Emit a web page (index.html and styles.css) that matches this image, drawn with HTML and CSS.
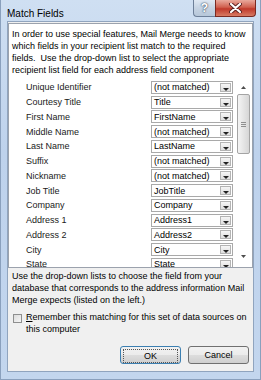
FILE: index.html
```html
<!DOCTYPE html>
<html>
  <head>
    <title>Match Fields</title>
    <link rel="stylesheet" href="styles.css">
  </head>
  <body>
    <div class="window">

      <div class="titlebar">
        <span class="title">Match Fields</span>
        <div class="caption-buttons">
          <span class="cap-btn help">?</span>
          <span class="cap-btn close">
            <svg width="13" height="10" viewBox="0 0 13 10">
              <path d="M2 1 L11 9 M11 1 L2 9" stroke="#5a2020" stroke-width="4" stroke-linecap="round"/>
              <path d="M2 1 L11 9 M11 1 L2 9" stroke="#ffffff" stroke-width="2.2" stroke-linecap="round"/>
            </svg>
          </span>
        </div>
      </div>

      <div class="client">

        <div class="panel">
          <p class="intro">
            In order to use special features, Mail Merge needs to know
            which fields in your recipient list match to the required
            fields.&nbsp; Use the drop-down list to select the appropriate
            recipient list field for each address field component
          </p>

          <div class="list">
            <div class="rows">
              <div class="row"><span class="label">Unique Identifier</span><span class="combo"><span class="value">(not matched)</span><span class="drop"></span></span></div>
              <div class="row"><span class="label">Courtesy Title</span><span class="combo"><span class="value">Title</span><span class="drop"></span></span></div>
              <div class="row"><span class="label">First Name</span><span class="combo"><span class="value">FirstName</span><span class="drop"></span></span></div>
              <div class="row"><span class="label">Middle Name</span><span class="combo"><span class="value">(not matched)</span><span class="drop"></span></span></div>
              <div class="row"><span class="label">Last Name</span><span class="combo"><span class="value">LastName</span><span class="drop"></span></span></div>
              <div class="row"><span class="label">Suffix</span><span class="combo"><span class="value">(not matched)</span><span class="drop"></span></span></div>
              <div class="row"><span class="label">Nickname</span><span class="combo"><span class="value">(not matched)</span><span class="drop"></span></span></div>
              <div class="row"><span class="label">Job Title</span><span class="combo"><span class="value">JobTitle</span><span class="drop"></span></span></div>
              <div class="row"><span class="label">Company</span><span class="combo"><span class="value">Company</span><span class="drop"></span></span></div>
              <div class="row"><span class="label">Address 1</span><span class="combo"><span class="value">Address1</span><span class="drop"></span></span></div>
              <div class="row"><span class="label">Address 2</span><span class="combo"><span class="value">Address2</span><span class="drop"></span></span></div>
              <div class="row"><span class="label">City</span><span class="combo"><span class="value">City</span><span class="drop"></span></span></div>
              <div class="row"><span class="label">State</span><span class="combo"><span class="value">State</span><span class="drop"></span></span></div>
            </div>

            <div class="scrollbar">
              <span class="sb-arrow">
                <svg width="5" height="3" viewBox="0 0 5 3"><polygon points="0,3 5,3 2.5,0" fill="#4d4d4d"/></svg>
              </span>
              <div class="sb-track">
                <div class="sb-thumb"><span class="grip"></span></div>
              </div>
              <span class="sb-arrow">
                <svg width="5" height="3" viewBox="0 0 5 3"><polygon points="0,0 5,0 2.5,3" fill="#4d4d4d"/></svg>
              </span>
            </div>
          </div>
        </div>

        <p class="note">
          Use the drop-down lists to choose the field from your
          database that corresponds to the address information Mail
          Merge expects (listed on the left.)
        </p>

        <div class="remember">
          <span class="checkbox"></span>
          <span class="remember-text"><u>R</u>emember this matching for this set of data sources on this computer</span>
        </div>

        <div class="buttons">
          <button class="btn default"><span class="focus">OK</span></button>
          <button class="btn">Cancel</button>
        </div>

      </div>
    </div>
  </body>
</html>
```

FILE: styles.css
```css
body {
    margin: 0;
    padding: 0;
    font-family: "Liberation Sans", Arial, sans-serif;
    font-size: 9px;
    color: #000000;
    background-color: #bfd3ec;
}

.window {
    width: 261px;
    height: 380px;
    box-sizing: border-box;
    background: linear-gradient(#cfdff2, #bed2ec 40%, #c3d6ee);
    border: 1px solid #8aa0bd;
    border-top: none;
    display: flex;
    flex-direction: column;
}

.titlebar {
    height: 21px;
    display: flex;
    flex-direction: row;
    align-items: flex-start;
    justify-content: space-between;
}

.title {
    font-size: 10px;
    padding: 8px 0 0 6px;
}

.caption-buttons {
    display: flex;
    flex-direction: row;
    margin-right: 4px;
}

.cap-btn {
    height: 16px;
    display: flex;
    align-items: center;
    justify-content: center;
    border: 1px solid #6d7f99;
    border-top: none;
}

.help {
    width: 21px;
    border-right: none;
    border-radius: 0 0 0 4px;
    background: linear-gradient(#dfe8f3, #c6d3e3 50%, #b7c7da);
    color: #ffffff;
    font-size: 12px;
    font-weight: bold;
    text-shadow: 0 0 2px #3c4a5c, 0 0 1px #3c4a5c;
}

.close {
    width: 39px;
    border-color: #7a2a22;
    border-radius: 0 0 4px 0;
    background: linear-gradient(#e9a99c, #d0604f 45%, #c0392b 55%, #d77a63);
}

.client {
    margin: 0 6px;
    height: 351px;
    box-sizing: border-box;
    background-color: #f0f0f0;
    border: 1px solid #90a4be;
    padding: 1px 0 0 0;
    display: flex;
    flex-direction: column;
}

.panel {
    height: 245px;
    box-sizing: border-box;
    background-color: #ffffff;
    border: 1px solid #9ba2ad;
    overflow: hidden;
}

.intro {
    margin: 0;
    padding: 4px 3px 0 3px;
    line-height: 12px;
}

.list {
    display: flex;
    flex-direction: row;
    margin: 4px 0 0 4px;
    height: 187px;
    overflow: hidden;
}

.rows {
    width: 220px;
    display: flex;
    flex-direction: column;
}

.row {
    height: 14.75px;
    flex-shrink: 0;
    display: flex;
    flex-direction: row;
    align-items: center;
}

.label {
    width: 125px;
    padding-left: 13px;
    color: #1a1a1a;
}

.combo {
    width: 82px;
    height: 13px;
    box-sizing: border-box;
    border: 1px solid #a9a9a9;
    display: flex;
    flex-direction: row;
    align-items: center;
    justify-content: space-between;
    padding-right: 1px;
}

.value {
    padding-left: 2px;
}

.drop {
    width: 11px;
    height: 9px;
    box-sizing: border-box;
    border: 1px solid #b4b4b4;
    background: linear-gradient(#f6f6f6, #dedede);
    position: relative;
}

.drop::after {
    content: "";
    position: absolute;
    left: 2px;
    top: 4px;
    border-left: 3px solid transparent;
    border-right: 3px solid transparent;
    border-top: 3px solid #222222;
}

.scrollbar {
    width: 13px;
    margin-left: 4px;
    height: 183px;
    display: flex;
    flex-direction: column;
    align-items: center;
}

.sb-arrow {
    height: 14px;
    display: flex;
    align-items: center;
    justify-content: center;
}

.sb-track {
    flex: 1;
    width: 13px;
}

.sb-thumb {
    height: 60px;
    box-sizing: border-box;
    border: 1px solid #a4a4a4;
    border-radius: 2px;
    background: linear-gradient(90deg, #f4f4f4, #e2e2e2 60%, #d6d6d6);
    display: flex;
    align-items: center;
    justify-content: center;
}

.grip {
    width: 5px;
    height: 5px;
    background: repeating-linear-gradient(#8f8f8f 0, #8f8f8f 1px, transparent 1px, transparent 2px);
}

.note {
    margin: 2px 0 0 0;
    padding: 0 3px 0 4px;
    line-height: 12px;
}

.remember {
    margin: 6px 0 0 5px;
    display: flex;
    flex-direction: row;
    align-items: flex-start;
    line-height: 11.5px;
}

.checkbox {
    width: 9px;
    height: 9px;
    flex-shrink: 0;
    box-sizing: border-box;
    margin: 2px 4px 0 0;
    border: 1px solid #8e8f8f;
    background: linear-gradient(135deg, #dcdcdc, #f6f6f6);
}

.remember-text u {
    text-underline-offset: 1px;
}

.buttons {
    display: flex;
    flex-direction: row;
    justify-content: flex-end;
    gap: 7px;
    margin: 11px 4px 0 0;
}

.btn {
    width: 61px;
    height: 18px;
    padding: 0;
    font-family: "Liberation Sans", Arial, sans-serif;
    font-size: 9px;
    color: #000000;
    border: 1px solid #707070;
    border-radius: 3px;
    background: linear-gradient(#f2f2f2, #ebebeb 50%, #dddddd 51%, #cfcfcf);
}

.default {
    border-color: #3c7fb1;
    padding: 2px;
}

.focus {
    display: block;
    height: 12px;
    line-height: 12px;
    border: 1px dotted #555555;
}
```
